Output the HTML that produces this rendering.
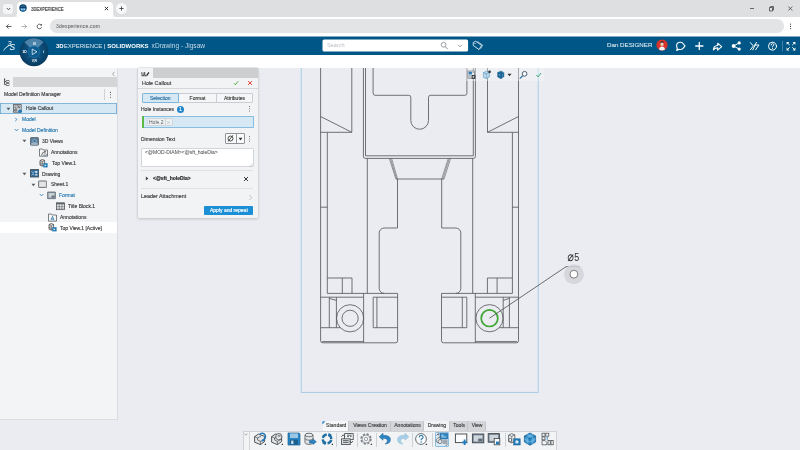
<!DOCTYPE html>
<html lang="en">
<head>
<meta charset="utf-8">
<title>3DEXPERIENCE</title>
<style>
*{box-sizing:border-box;margin:0;padding:0}
html,body{width:800px;height:450px;overflow:hidden;background:#eaecf1;font-family:"Liberation Sans",Arial,sans-serif;font-size:5px;color:#3d3d3d}
.abs{position:absolute}
#tabstrip{position:absolute;left:0;top:0;width:800px;height:17px;background:#dedfe1}
#tab{position:absolute;left:16.8px;top:2.4px;width:96.2px;height:15px;background:#fff;border-radius:4px 4px 0 0}
#navbar{position:absolute;left:0;top:16.5px;width:800px;height:20.5px;background:#fff}
#url{position:absolute;left:49.6px;top:19.3px;width:734.4px;height:13.4px;border-radius:6.7px;background:#e3e4e6}
#hdr{position:absolute;left:0;top:36.5px;width:800px;height:18.5px;background:#005686}
#white2{position:absolute;left:0;top:55px;width:800px;height:13px;background:#fff}
.t{position:absolute;white-space:nowrap;line-height:1;-webkit-text-stroke:0.15px currentColor;will-change:transform}
#lp{position:absolute;left:0;top:68px;width:117.5px;height:351.5px;background:#f3f4f6;border-right:1px solid #dadcdf;border-bottom:1px solid #dadcdf;border-radius:0 2px 0 0}
.row{position:absolute;left:0;height:10.8px;width:117px}
.row .t{top:3.4px;font-size:5px;color:#3d3d3d}
.blue{color:#2a7ab0 !important}
#dlg{position:absolute;left:138px;top:68px;width:119.5px;height:150px;background:#f2f3f5;box-shadow:0 0 0 0.6px #cfd2d6,0 1px 3px rgba(0,0,0,.2);border-radius:1px}
</style>
</head>
<body>
<!-- browser chrome -->
<div id="tabstrip">
  <div class="abs" style="left:3px;top:4px;width:10px;height:10px;border-radius:3px;background:#f5f5f6"></div>
  <svg class="abs" style="left:5.5px;top:7px" width="5" height="4" viewBox="0 0 5 4"><path d="M0.8 1 L2.5 2.8 L4.2 1" fill="none" stroke="#333" stroke-width="0.8"/></svg>
  <div id="tab">
    <svg class="abs" style="left:2.3px;top:1.4px" width="8" height="8" viewBox="0 0 8 8"><circle cx="4" cy="4" r="3.7" fill="#0a3f6b"/><path d="M0.9 4.6 Q4 3.4 7.1 4.6 Q6.4 7.4 4 7.5 Q1.6 7.4 0.9 4.6Z" fill="#2f7fb5"/><path d="M2.2 4.6h1.2v1.4h-1.2zM4.6 4.6h1.2v1.4h-1.2z" fill="#cfe2ef"/><path d="M2 2.6 Q4 1.2 6 2.6" fill="none" stroke="#5c9cc7" stroke-width="0.6"/></svg>
    <div class="t" style="left:14px;top:5.2px;font-size:4.8px;color:#333;transform:scaleX(0.88);transform-origin:0 0">3DEXPERIENCE</div>
    <svg class="abs" style="left:87.3px;top:3.2px" width="5" height="5" viewBox="0 0 5 5"><path d="M0.8 0.8L4.2 4.2M4.2 0.8L0.8 4.2" stroke="#222" stroke-width="0.9"/></svg>
  </div>
  <div class="abs" style="left:116px;top:3px;width:11px;height:11px;border-radius:50%;background:#f8f8f8"></div>
  <svg class="abs" style="left:119px;top:6px" width="5" height="5" viewBox="0 0 5 5"><path d="M2.5 0.4V4.6M0.4 2.5H4.6" stroke="#333" stroke-width="0.8"/></svg>
  <!-- window controls -->
  <svg class="abs" style="left:748px;top:4px" width="48" height="10" viewBox="0 0 48 10"><path d="M2 4.5H6" stroke="#333" stroke-width="0.7"/><path d="M21.5 3.5h3v3.5h-3z M22.5 3.5v-1h3v3.5h-1" fill="none" stroke="#333" stroke-width="0.7"/><path d="M40.3 2.5L44.3 6.5M44.3 2.5L40.3 6.5" stroke="#333" stroke-width="0.7"/></svg>
</div>
<div id="navbar"></div>
<svg class="abs" style="left:12px;top:12px" width="106" height="5" viewBox="12 12 106 5"><path d="M13.8 16.6 Q16.8 16.6 16.8 13.6 V16.6Z M116 16.6 Q113 16.6 113 13.6 V16.6Z" fill="#fff"/></svg>
<div id="url"></div>
<svg class="abs" style="left:5px;top:22px" width="40" height="9" viewBox="0 0 40 9"><path d="M1.5 4.5H6.5M3.6 2.3L1.4 4.5L3.6 6.7" fill="none" stroke="#333" stroke-width="0.8"/><path d="M16.5 4.5H21.5M19.4 2.3L21.6 4.5L19.4 6.7" fill="none" stroke="#9a9a9a" stroke-width="0.8"/><path d="M36.3 3.2A2.3 2.3 0 1 0 36.6 5.2" fill="none" stroke="#333" stroke-width="0.8"/><path d="M36.9 1.8V3.6H35.1Z" fill="#333"/></svg>
<div class="t" style="left:55.6px;top:24.2px;font-size:5px;color:#7a7a7a;letter-spacing:0.2px">3dexperience.com</div>
<svg class="abs" style="left:788.8px;top:22.8px" width="3" height="8" viewBox="0 0 3 8"><circle cx="1.5" cy="1.2" r="0.6" fill="#444"/><circle cx="1.5" cy="3.4" r="0.6" fill="#444"/><circle cx="1.5" cy="5.6" r="0.6" fill="#444"/></svg>

<!-- app header -->
<div class="abs" style="left:0;top:36px;width:800px;height:1px;background:#80abc3"></div>
<div id="hdr"></div>
<div id="white2"></div>
<!-- 3DS logo -->
<svg class="abs" style="left:2px;top:38px;will-change:transform" width="16" height="16" viewBox="0 0 16 16"><text x="5.6" y="8.2" font-size="7.4" font-style="italic" fill="#fff" font-family="Liberation Sans,sans-serif">3</text><text x="7.4" y="12.2" font-size="8.4" font-style="italic" fill="#fff" font-family="Liberation Sans,sans-serif">S</text><path d="M1.3 13.8 Q2.4 10.6 5.4 9 Q7.6 7.8 8.2 6 Q7.2 7.4 4.8 8.4 Q2 9.8 1.3 13.8Z" fill="#fff"/></svg>
<!-- compass -->
<svg class="abs" style="left:19px;top:36px;will-change:transform" width="30" height="32" viewBox="0 0 30 32">
  <defs><radialGradient id="cg" cx="50%" cy="45%" r="55%"><stop offset="0" stop-color="#0f5a8c"/><stop offset="0.6" stop-color="#0b4a76"/><stop offset="1" stop-color="#083a5f"/></radialGradient></defs>
  <circle cx="15" cy="15.8" r="14.4" fill="url(#cg)"/>
  <path d="M15 15.8 L5.4 6.2 A13.6 13.6 0 0 1 24.6 6.2 Z" fill="#8dbbdc" fill-opacity="0.5"/>
  <path d="M8.4 22.4 L11 19.8 M21.6 22.4 L19 19.8" stroke="#5f9bc4" stroke-width="0.4" stroke-opacity="0.7"/>
  <circle cx="15" cy="15.8" r="5.9" fill="#0b5b8e" stroke="#2f7fb2" stroke-width="0.5"/>
  <path d="M13.2 13 L18 15.8 L13.2 18.6 Z" fill="none" stroke="#e8f1f7" stroke-width="0.8" stroke-linejoin="round"/>
  <text x="15.3" y="8.9" font-size="3.8" fill="#fff" text-anchor="middle" font-family="Liberation Sans,sans-serif" font-style="italic" font-weight="bold">N</text>
  <text x="5.6" y="17" font-size="3.3" fill="#fff" text-anchor="middle" font-family="Liberation Sans,sans-serif" font-weight="bold">3D</text>
  <text x="24.6" y="17.2" font-size="3.8" fill="#fff" text-anchor="middle" font-family="Liberation Sans,sans-serif" font-style="italic" font-weight="bold">i</text>
  <text x="15.3" y="26.4" font-size="3.3" fill="#fff" text-anchor="middle" font-family="Liberation Sans,sans-serif" font-weight="bold">V,R</text>
</svg>
<div class="t" style="left:56px;top:42.8px;font-size:6px;color:#fff;-webkit-text-stroke:0"><b>3D</b><span style="color:#dce8f0">EXPERIENCE</span> | <b>SOLIDWORKS</b> <span style="color:#c4d9e7;font-size:6.6px;margin-left:1.3px">xDrawing - Jigsaw</span></div>
<!-- search -->
<svg class="abs" style="left:320px;top:37px" width="150" height="17" viewBox="320 37 150 17"><rect x="322.5" y="39.5" width="145.6" height="12.1" rx="1.6" fill="#fff"/></svg>
<div class="t" style="left:327px;top:43px;font-size:5.6px;color:#b9bdc2;-webkit-text-stroke:0">Search</div>
<svg class="abs" style="left:439px;top:41px" width="28" height="10" viewBox="0 0 28 10"><circle cx="4.6" cy="3.8" r="2.4" fill="none" stroke="#7d8288" stroke-width="0.75"/><path d="M6.3 5.6L8.8 8.2" stroke="#7d8288" stroke-width="0.9"/><path d="M19 3.8L21 5.8L23 3.8" fill="none" stroke="#7d8288" stroke-width="0.8"/></svg>
<svg class="abs" style="left:472px;top:40px" width="12" height="12" viewBox="0 0 12 12"><path d="M1.2 2.6 L3.6 1.2 L9.6 5.4 L7 9.6 L1.2 5.4 Z" fill="none" stroke="#fff" stroke-width="0.8" stroke-linejoin="round"/><circle cx="3" cy="3.3" r="0.6" fill="#fff"/><path d="M5.4 1.3 L10.7 5.2 L8.6 8.8" fill="none" stroke="#fff" stroke-width="0.6"/></svg>
<!-- right header -->
<div class="t" style="left:606.5px;top:42.3px;font-size:6.2px;color:#eaf1f6;-webkit-text-stroke:0.05px">Dan DESIGNER</div>
<svg class="abs" style="left:656.3px;top:39.2px" width="12" height="12" viewBox="0 0 12 12"><circle cx="6" cy="6" r="5.6" fill="#d9342b"/><path d="M3 10.6 Q3.4 7.4 6 7.4 Q8.6 7.4 9 10.6 Q6 12.4 3 10.6Z" fill="#f1f1f1"/><ellipse cx="6" cy="5" rx="1.7" ry="2.1" fill="#f0cdb8"/><path d="M4.1 4.6 Q4 2 6 2 Q8 2 7.9 4.6 Q7.2 3.4 6 3.5 Q4.8 3.4 4.1 4.6Z" fill="#2b2422"/></svg>
<svg class="abs" style="left:674px;top:39.5px" width="124" height="12" viewBox="0 0 124 12">
  <g fill="none" stroke="#fff" stroke-width="1.1" stroke-linecap="round" stroke-linejoin="round">
    <path d="M6.4 2.3 q1.6 0 2.6 1.2 l2 2.4 l-2 2.4 q-1 1.2 -2.6 1.2 q-0.8 0 -1.5 -0.3 l-2.2 1.2 l0.6 -2.3 q-0.7 -1 -0.7 -2.2 q0 -3.6 3.8 -3.6z"/>
    <path d="M25.3 2.4V9.6M21.7 6H28.9" stroke-width="1.3"/>
    <path d="M39.4 9.8 q0.2 -4 4.3 -4.3 v-2.3 l4 3.5 l-4 3.5 v-2.3 q-2.6 -0.1 -4.3 1.9z"/>
    <path d="M59.6 6 L65 3 M59.6 6 L65 9" stroke-width="1"/>
    <path d="M76.4 2.6 L79.4 6 L76.4 9.8 M82.4 2.4 L78.8 9.8 M80.4 5 H85 L81.6 9.8" stroke-width="1"/>
    <circle cx="98.5" cy="6.2" r="4" stroke-width="1"/>
    <path d="M97.2 5.1 q0 -1.4 1.3 -1.4 q1.4 0 1.4 1.2 q0 0.9 -1.4 1.5 v0.6" stroke-width="0.9"/>
    <path d="M108.5 1.2V10.8" stroke="#7fb0cf" stroke-width="0.5"/>
    <path d="M113.4 2.8 L115.4 4.8 M120.6 2.8 L118.6 4.8 M113.4 9.6 L115.4 7.6 M120.6 9.6 L118.6 7.6" stroke-width="1"/>
  </g>
  <g fill="#fff"><circle cx="59.6" cy="6" r="1.9"/><circle cx="65.2" cy="2.9" r="1.6"/><circle cx="65.2" cy="9.1" r="1.6"/><circle cx="98.5" cy="8.6" r="0.55"/>
  <path d="M112.6 2h2.8l-2.8 2.8z M121.4 2h-2.8l2.8 2.8z M112.6 10.4h2.8l-2.8 -2.8z M121.4 10.4h-2.8l2.8 -2.8z"/></g>
</svg>
<!-- drawing -->
<svg class="abs" style="left:0;top:68px;will-change:transform" width="800" height="382" viewBox="0 68 800 382">
<rect x="301.2" y="40" width="237" height="352.4" fill="none" stroke="#9dcbe2" stroke-width="0.9"/>
<g fill="none" stroke="#5a5a5c" stroke-width="0.85" stroke-linejoin="round">
<!-- left column -->
<path d="M320.6 60V340.8Q320.6 342.8 322.6 342.8H395.6Q397.6 342.8 397.6 340.8V293.4"/>
<path d="M351.8 60V132.3H320.6M320.6 116.5L351.8 132.3"/>
<path d="M327.3 132.3V293.4M320.6 207.2H327.3"/>
<!-- right column -->
<path d="M518.5 60V340.8Q518.5 342.8 516.5 342.8H443.5Q441.5 342.8 441.5 340.8V293.4"/>
<path d="M487.5 60V132.3H518.5M518.5 116.5L487.5 132.3"/>
<path d="M512.4 132.3V293.4M512.4 207.2H518.5"/>
<!-- centre body -->
<path d="M363.4 60V156.4Q363.4 158.4 365.4 158.4H473.4Q475.4 158.4 475.4 156.4V60"/>
<path d="M365.5 60V155.8H473.3V60"/>
<path d="M373.1 60V93Q373.1 95.3 375.1 95.3H408.8Q410.8 95.3 410.8 97.3V120.4A8.85 8.85 0 0 0 428.5 120.4V97.3Q428.5 95.3 430.5 95.3H464.9Q466.9 95.3 466.9 93.3V60"/>
<path d="M367.3 158.4V293.4M472.7 158.4V293.4"/>
<path d="M389.3 158.4L395.8 178.8M391.6 158.4L397.5 178.8M390.4 158.4L396.6 178.8" stroke-width="0.6"/>
<path d="M450.6 158.4L444.1 178.8M448.3 158.4L441.7 178.8M449.4 158.4L442.9 178.8" stroke-width="0.6"/>
<path d="M395.8 179H444.1"/>
<path d="M397.5 178.8V228H384.2A5 5 0 0 0 379.2 233V288.4A5 5 0 0 0 384.2 293.4"/>
<path d="M441.7 178.8V228H455.8A5 5 0 0 1 460.8 233V288.4A5 5 0 0 1 455.8 293.4"/>
<!-- bottom-left -->
<path d="M327.3 278H352V293.4M342.3 278V293.4M327.3 293.4H397.6"/>
<path d="M320.6 297.2H363.6M363.6 293.4V342.8M322 341.6H363.6"/>
<path d="M397.6 297.2H373.2V327.7H397.6M376.9 297.2V327.7"/>
<path d="M320.6 327.7H340.3M329.3 297.2V327.7M336.4 297.2V327.7M329.3 298.4L336.4 300.4"/>
<circle cx="350.1" cy="318.3" r="13.6"/>
<circle cx="350.1" cy="318.3" r="8.1"/>
<!-- bottom-right -->
<path d="M512.4 278H487.4V293.4M497.1 278V293.4M512.4 293.4H441.5"/>
<path d="M518.5 297.2H475.3M475.3 293.4V342.8M517 341.6H475.3"/>
<path d="M441.5 297.2H466.8V327.7H441.5M462.3 297.2V327.7"/>
<path d="M518.5 327.7H499.3M509.4 297.2V327.7M503.2 297.2V327.7M509.4 298.4L503.2 300.4"/>
<circle cx="489.5" cy="318.2" r="13.6"/>
</g>
<circle cx="489.5" cy="318.2" r="8.3" fill="none" stroke="#3fa535" stroke-width="1.7"/>
<path d="M489.5 318.2L566 266.7H579.8" fill="none" stroke="#4a4a4c" stroke-width="0.8"/>
<circle cx="573.9" cy="274.2" r="10" fill="#d2d4d8" fill-opacity="0.85"/>
<circle cx="573.9" cy="274.2" r="3.9" fill="#fff" stroke="#4a4a4c" stroke-width="0.7"/>
<text transform="translate(567.4,260.5) scale(0.9,1.08)" font-family="DejaVu Sans, Liberation Sans, sans-serif" font-size="12" fill="#2a2a2a">⌀</text><text transform="translate(574.3,260.5) scale(0.78,1)" font-family="Liberation Sans, sans-serif" font-size="11.4" fill="#2a2a2a">5</text>
</svg>
<!-- view toolbar -->
<div class="abs" style="left:466px;top:68px;width:78px;height:13px;background:rgba(246,247,249,0.4)"></div>
<svg class="abs" style="left:467px;top:68px" width="79" height="13" viewBox="467 68 79 13">
  <rect x="467.9" y="71" width="6.8" height="7.2" fill="#e4e9ed" stroke="#59646e" stroke-width="0.6"/><rect x="468.7" y="71.8" width="3.2" height="2.6" fill="#2a7ab4"/><path d="M472.6 72.4h1.4M468.8 75.6h2M468.8 77h2" stroke="#59646e" stroke-width="0.5"/><rect x="471.6" y="75" width="3.8" height="3.8" fill="#34383c"/><circle cx="473.4" cy="76.8" r="0.9" fill="#e4e9ed"/>
  <path d="M483.4 72.6l3-1.4l3 1.2v4.6l-3.2 1.6l-2.8-1.2z" fill="#b5d3e6" stroke="#4a8cba" stroke-width="0.5"/><path d="M483.4 72.6l2.8 1.2v4.8M486.2 73.8l3.2-1.4" fill="none" stroke="#4a8cba" stroke-width="0.45"/><path d="M484.6 75l1 0.4v1.8" fill="none" stroke="#e8f1f7" stroke-width="0.5"/><circle cx="489.6" cy="71.8" r="1.35" fill="#34383c"/>
  <path d="M497.6 72.6l3-1.6l3.4 1.4v4.2l-3 2.2l-3.4-1.8z" fill="#1f6fa3" stroke="#174f77" stroke-width="0.4"/><path d="M497.6 72.6l3.4 1.6v4.6M501 74.2l3-1.8" fill="none" stroke="#174f77" stroke-width="0.4"/><path d="M497 71.6l1.8-1l1.4 0.8M502 70.6l1.8 0.8l-0.2 1.4M499 74.6l1 0.5M502.2 75.2l1-0.7" fill="none" stroke="#dfe9f0" stroke-width="0.6"/>
  <path d="M507.4 73.8h4.2l-2.1 2.5z" fill="#333"/>
  <circle cx="524.6" cy="73.8" r="2.4" fill="#f3f6f8" stroke="#4f6475" stroke-width="1"/><path d="M522.8 75.8l-3 2.8" stroke="#2a6f9f" stroke-width="1.2"/>
  <path d="M536.4 75l1.7 1.9l2.9-3.9" fill="none" stroke="#27a06b" stroke-width="0.9"/>
</svg>
<!-- left panel -->
<div id="lp">
<svg class="abs" style="left:110.5px;top:2.5px" width="5" height="6" viewBox="0 0 5 6"><path d="M3.4 0.8L1.6 3L3.4 5.2" fill="none" stroke="#777" stroke-width="0.6"/></svg>
<div class="abs" style="left:0;top:9px;width:117px;height:9.6px;background:#d4d5d7"></div>
<div class="abs" style="left:0;top:9px;width:13px;height:9.6px;background:#f3f4f6"></div>
<svg class="abs" style="left:3px;top:10px" width="8" height="9" viewBox="0 0 8 9"><path d="M1.6 0.8V6.6H3.4M1.6 3.6H3.4" fill="none" stroke="#2a2a2a" stroke-width="0.8"/><rect x="3.4" y="2.7" width="2.6" height="1.8" fill="none" stroke="#2a2a2a" stroke-width="0.6"/><rect x="3.4" y="5.7" width="2.6" height="1.8" fill="none" stroke="#2a2a2a" stroke-width="0.6"/><circle cx="1.6" cy="1" r="0.6" fill="#2a2a2a"/></svg>
<div class="t" style="left:3.6px;top:23.9px;font-size:5px;color:#3d3d3d">Model Definition Manager</div>
<div class="abs" style="left:104.4px;top:21px;width:0.5px;height:11px;background:#cfd1d4"></div>
<svg class="abs" style="left:108.5px;top:22.5px" width="3" height="8" viewBox="0 0 3 8"><circle cx="1.5" cy="1.4" r="0.55" fill="#555"/><circle cx="1.5" cy="3.8" r="0.55" fill="#555"/><circle cx="1.5" cy="6.2" r="0.55" fill="#555"/></svg>
<div class="row" style="top:35.1px;background:#d6e8f4;box-shadow:inset 0 0 0 0.8px #6aa5cf;">
<svg class="abs" style="left:5.6px;top:3.6px" width="5" height="4" viewBox="0 0 5 4"><path d="M0.5 0.7H4.3L2.4 3.3Z" fill="#5a5a5a"/></svg>
<svg class="abs" style="left:13.4px;top:1px" width="9" height="9" viewBox="0 0 9 9"><rect x="0.4" y="0.6" width="7.8" height="7.6" fill="#d5d8db" stroke="#55595d" stroke-width="0.8"/><path d="M1.4 2h2.4M4.6 2h2.6M1.4 3.6h2M4.4 3.6h2.8M1.2 7.2L3.6 4.6M4.4 1.4L6.8 4" stroke="#55595d" stroke-width="0.7"/><circle cx="2.8" cy="6" r="1.2" fill="none" stroke="#444" stroke-width="0.6"/><circle cx="7" cy="7.2" r="1.8" fill="#1f78b4"/></svg>
<div class="t" style="left:26px">Hole Callout</div>
</div>
<div class="row" style="top:46.0px;">
<svg class="abs" style="left:14.0px;top:3px" width="4" height="5" viewBox="0 0 4 5"><path d="M1.2 0.8L2.9 2.5L1.2 4.2" fill="none" stroke="#2a7ab0" stroke-width="0.85"/></svg>
<div class="t blue" style="left:21.6px">Model</div>
</div>
<div class="row" style="top:56.8px;">
<svg class="abs" style="left:13.5px;top:3.4px" width="5" height="4" viewBox="0 0 5 4"><path d="M0.8 1.1L2.5 2.9L4.2 1.1" fill="none" stroke="#2a7ab0" stroke-width="0.85"/></svg>
<div class="t blue" style="left:21.6px">Model Definition</div>
</div>
<div class="row" style="top:67.6px;">
<svg class="abs" style="left:22.4px;top:3.6px" width="5" height="4" viewBox="0 0 5 4"><path d="M0.5 0.7H4.3L2.4 3.3Z" fill="#5a5a5a"/></svg>
<svg class="abs" style="left:30.4px;top:1px" width="9" height="9" viewBox="0 0 9 9"><rect x="0.4" y="0.6" width="8.2" height="7.6" rx="0.8" fill="#5f7f9a" stroke="#3f4c57" stroke-width="0.7"/><rect x="1.2" y="6.4" width="6.6" height="1.2" fill="#c9d3dc"/><path d="M2.8 5.4V3.6L4.5 2.4L6.2 3.6V5.4Z" fill="#2a6f9f" stroke="#dfe8ef" stroke-width="0.5"/></svg>
<div class="t" style="left:42.0px">3D Views</div>
</div>
<div class="row" style="top:78.6px;">
<svg class="abs" style="left:39.0px;top:1px" width="9" height="9" viewBox="0 0 9 9"><path d="M0.5 1h3l0.8 1h4.2v6.2h-8z" fill="#f4f5f6" stroke="#50585f" stroke-width="0.75"/><path d="M2.6 7.4 q0.2-3.4 3.8-3.8 M5 2.8l1.6 0.7l-0.9 1.3" fill="none" stroke="#3a3a3a" stroke-width="0.7"/><path d="M4.6 7.6a1.8 1.8 0 0 1 3-1.6v1.6z" fill="#c9d3dc" stroke="#50585f" stroke-width="0.4"/></svg>
<div class="t" style="left:51.4px">Annotations</div>
</div>
<div class="row" style="top:89.6px;">
<svg class="abs" style="left:39.0px;top:1px" width="9" height="9" viewBox="0 0 9 9"><path d="M1 1.6l2.2-1.1l2.4 0.9v4.6l-2.2 1.1l-2.4-0.9z" fill="#e9e9e9" stroke="#4a4a4a" stroke-width="0.8"/><path d="M1 1.6l2.4 0.9v4.6M3.4 2.5l2.2-1.1" fill="none" stroke="#4a4a4a" stroke-width="0.6"/><circle cx="2.2" cy="4.6" r="0.9" fill="none" stroke="#4a4a4a" stroke-width="0.5"/><rect x="4.2" y="4.2" width="4.4" height="4.2" fill="#1f78b4"/><path d="M5.6 5.2l1.8 1.1l-1.8 1.1z" fill="#fff"/></svg>
<div class="t" style="left:51.6px">Top View.1</div>
</div>
<div class="row" style="top:100.2px;">
<svg class="abs" style="left:22.4px;top:3.6px" width="5" height="4" viewBox="0 0 5 4"><path d="M0.5 0.7H4.3L2.4 3.3Z" fill="#5a5a5a"/></svg>
<svg class="abs" style="left:30.4px;top:1px" width="9" height="9" viewBox="0 0 9 9"><rect x="0.4" y="0.6" width="8.2" height="7.4" fill="#2f6c9a" stroke="#3b4650" stroke-width="0.8"/><path d="M1.6 2.4l1.4 1.4l1.4-1.4M1.6 6.2l1.4-1.4l1.4 1.4" fill="none" stroke="#e6eef4" stroke-width="0.6"/><rect x="5.2" y="2" width="2.2" height="1.8" fill="#dfe8ef"/><rect x="5.2" y="4.8" width="2.2" height="1.8" fill="#b9cddc"/></svg>
<div class="t" style="left:42.0px">Drawing</div>
</div>
<div class="row" style="top:111.0px;">
<svg class="abs" style="left:30.6px;top:3.6px" width="5" height="4" viewBox="0 0 5 4"><path d="M0.5 0.7H4.3L2.4 3.3Z" fill="#5a5a5a"/></svg>
<svg class="abs" style="left:38.4px;top:1px" width="9" height="9" viewBox="0 0 9 9"><rect x="0.5" y="0.9" width="8.2" height="6.6" rx="0.6" fill="#c9cbcd" stroke="#64686c" stroke-width="0.8"/><rect x="1.6" y="2" width="6" height="4.4" fill="#e4e5e6"/></svg>
<div class="t" style="left:50.8px">Sheet.1</div>
</div>
<div class="row" style="top:121.8px;">
<svg class="abs" style="left:38.5px;top:3.4px" width="5" height="4" viewBox="0 0 5 4"><path d="M0.8 1.1L2.5 2.9L4.2 1.1" fill="none" stroke="#2a7ab0" stroke-width="0.85"/></svg>
<svg class="abs" style="left:47.0px;top:1px" width="9" height="9" viewBox="0 0 9 9"><rect x="0.4" y="0.9" width="8.2" height="6.8" rx="0.5" fill="#7d8a96" stroke="#56616b" stroke-width="0.6"/><rect x="1.5" y="2" width="6" height="4.6" fill="#c9d0d6"/><rect x="4.6" y="4.6" width="2.9" height="2" fill="#5f6b76"/></svg>
<div class="t blue" style="left:58.8px">Format</div>
</div>
<div class="row" style="top:132.6px;">
<svg class="abs" style="left:56.0px;top:1px" width="9" height="9" viewBox="0 0 9 9"><rect x="0.5" y="0.9" width="8" height="6.8" fill="#fff" stroke="#3f444a" stroke-width="0.7"/><path d="M0.5 2.7h8M0.5 4.4h8M0.5 6.1h8M3.2 2.7v5M5.9 2.7v5" stroke="#3f444a" stroke-width="0.5"/><path d="M0.5 1.3h8" stroke="#3f444a" stroke-width="1"/></svg>
<div class="t" style="left:68.0px">Title Block.1</div>
</div>
<div class="row" style="top:143.6px;">
<svg class="abs" style="left:47.6px;top:1px" width="9" height="9" viewBox="0 0 9 9"><path d="M0.5 1h3l0.8 1h4.2v6.2h-8z" fill="#f6f7f8" stroke="#50585f" stroke-width="0.75"/><path d="M3 7.4l1.5-4l1.5 4M3.6 6.1h1.9" fill="none" stroke="#1f6fa3" stroke-width="0.75"/></svg>
<div class="t" style="left:59.8px">Annotations</div>
</div>
<div class="row" style="top:154.2px;background:#fff;">
<svg class="abs" style="left:47.6px;top:1px" width="9" height="9" viewBox="0 0 9 9"><path d="M1 1.6l2.2-1.1l2.4 0.9v4.6l-2.2 1.1l-2.4-0.9z" fill="#e9e9e9" stroke="#4a4a4a" stroke-width="0.8"/><path d="M1 1.6l2.4 0.9v4.6M3.4 2.5l2.2-1.1" fill="none" stroke="#4a4a4a" stroke-width="0.6"/><circle cx="2.2" cy="4.6" r="0.9" fill="none" stroke="#4a4a4a" stroke-width="0.5"/><rect x="4.2" y="4.2" width="4.4" height="4.2" fill="#1f78b4"/><path d="M5.6 5.2l1.8 1.1l-1.8 1.1z" fill="#fff"/></svg>
<div class="t" style="left:60.0px">Top View.1 [Active]</div>
</div>
</div>
<!-- dialog -->
<div id="dlg">
<div class="abs" style="left:0;top:0;width:119.5px;height:9.8px;background:#cdcecf"></div>
<div class="abs" style="left:0;top:0;width:14.6px;height:9.8px;background:#f2f3f5"></div>
<svg class="abs" style="left:3.4px;top:3px" width="9" height="6" viewBox="0 0 9 6"><path d="M0.9 1V4.4H2.9V1.6M3.7 1V4.4H5.4" fill="none" stroke="#2e2e2e" stroke-width="0.8"/><path d="M5.6 4.6L7.9 1.3" stroke="#2e2e2e" stroke-width="1.3"/><path d="M0.6 5.2H6" stroke="#555" stroke-width="0.4"/></svg>
<div class="t" style="left:4px;top:12.9px;font-size:5.4px;color:#3d3d3d">Hole Callout</div>
<svg class="abs" style="left:95.0px;top:12.0px" width="6" height="6" viewBox="0 0 6 6"><path d="M0.8 3.2L2.3 4.8L5.2 1.2" fill="none" stroke="#4aa83a" stroke-width="0.9"/></svg>
<svg class="abs" style="left:109.0px;top:12.0px" width="6" height="6" viewBox="0 0 6 6"><path d="M1 1L5 5M5 1L1 5" fill="none" stroke="#e0352b" stroke-width="0.9"/></svg>
<div class="abs" style="left:0;top:20.0px;width:119.5px;height:0.5px;background:#d5d7da"></div>
<div class="abs" style="left:4.0px;top:24.5px;width:110.5px;height:10.4px;border:0.6px solid #c9ccd0;border-radius:1.2px;background:#f5f6f7"></div>
<div class="abs" style="left:4.0px;top:24.5px;width:36.5px;height:10.4px;border:0.7px solid #7fb6dc;border-radius:1.2px 0 0 1.2px;background:#d6e8f4"></div>
<div class="abs" style="left:77.6px;top:24.5px;width:0.6px;height:10.4px;background:#c9ccd0"></div>
<div class="t" style="left:4.0px;top:28.0px;width:36.5px;text-align:center;font-size:5px;color:#2a6f9f">Selection</div>
<div class="t" style="left:40.5px;top:28.0px;width:37px;text-align:center;font-size:5px;color:#3d3d3d">Format</div>
<div class="t" style="left:77.6px;top:28.0px;width:37px;text-align:center;font-size:5px;color:#3d3d3d">Attributes</div>
<div class="t" style="left:3.0px;top:39.0px;font-size:5px;color:#3d3d3d">Hole Instances</div>
<div class="abs" style="left:38.9px;top:37.8px;width:7.1px;height:7.1px;border-radius:50%;background:#1f86c8"></div>
<div class="t" style="left:38.9px;top:40.1px;width:7px;text-align:center;font-size:4.6px;color:#fff">1</div>
<svg class="abs" style="left:110.0px;top:37.0px" width="3" height="8" viewBox="0 0 3 8"><circle cx="1.5" cy="1.6" r="0.5" fill="#555"/><circle cx="1.5" cy="3.8" r="0.5" fill="#555"/><circle cx="1.5" cy="6" r="0.5" fill="#555"/></svg>
<div class="abs" style="left:3.5px;top:48.4px;width:112.2px;height:11.2px;border:0.7px solid #86bde2;background:#d6e8f4;border-radius:0.8px"></div>
<div class="abs" style="left:3.5px;top:48.4px;width:2.2px;height:11.2px;background:#5cb947"></div>
<div class="abs" style="left:8.6px;top:50.3px;width:26px;height:7.8px;border:0.5px solid #cdd4da;background:#eff2f5;border-radius:1.2px"></div>
<div class="abs" style="left:26.6px;top:50.3px;width:0.5px;height:7.8px;background:#cdd4da"></div>
<div class="t" style="left:11.0px;top:52.1px;font-size:5px;color:#5a5a5a;-webkit-text-stroke:0">Hole.2</div>
<svg class="abs" style="left:28.0px;top:51.6px" width="5" height="5" viewBox="0 0 5 5"><path d="M1 1L4 4M4 1L1 4" fill="none" stroke="#a9afb6" stroke-width="0.5"/></svg>
<div class="t" style="left:3.0px;top:69.0px;font-size:5px;color:#3d3d3d">Dimension Text</div>
<div class="abs" style="left:86.5px;top:65.2px;width:20px;height:10.4px;border:0.6px solid #8e949a;background:#fbfbfc;border-radius:1px"></div>
<div class="abs" style="left:97.6px;top:65.2px;width:0.5px;height:10.4px;background:#8e949a"></div>
<svg class="abs" style="left:87.6px;top:66.0px" width="9" height="9" viewBox="0 0 9 9"><circle cx="4.5" cy="4.5" r="2.5" fill="none" stroke="#222" stroke-width="0.8"/><path d="M2 7.6L7 1.2" stroke="#222" stroke-width="0.8"/></svg>
<svg class="abs" style="left:99.5px;top:68.6px" width="5" height="4" viewBox="0 0 5 4"><path d="M0.6 0.8H4.4L2.5 3.4Z" fill="#333"/></svg>
<svg class="abs" style="left:109.6px;top:66.6px" width="3" height="8" viewBox="0 0 3 8"><circle cx="1.5" cy="1.6" r="0.5" fill="#555"/><circle cx="1.5" cy="3.8" r="0.5" fill="#555"/><circle cx="1.5" cy="6" r="0.5" fill="#555"/></svg>
<div class="abs" style="left:3.4px;top:79.6px;width:112.4px;height:19.8px;border:0.6px solid #d3d6da;background:#fff;border-radius:1px"></div>
<div class="t" style="left:6.7px;top:81.7px;font-size:5px;color:#555;-webkit-text-stroke:0.05px">&lt;@MOD-DIAM&gt;&lt;@sft_holeDia&gt;</div>
<svg class="abs" style="left:111.2px;top:95.0px" width="4" height="4" viewBox="0 0 4 4"><path d="M3.6 0.6L0.6 3.6M3.6 2.2L2.2 3.6" stroke="#9aa0a6" stroke-width="0.4"/></svg>
<div class="abs" style="left:3.4px;top:102.2px;width:112px;height:0.5px;background:#dfe1e4"></div>
<svg class="abs" style="left:7.4px;top:108.2px" width="4" height="5" viewBox="0 0 4 5"><path d="M0.8 0.6V4.4L3.4 2.5Z" fill="#444"/></svg>
<div class="t" style="left:14.7px;top:108.0px;font-size:5px;color:#222;font-weight:bold">&lt;@sft_holeDia&gt;</div>
<svg class="abs" style="left:104.7px;top:107.6px" width="6" height="6" viewBox="0 0 6 6"><path d="M1 1L5 5M5 1L1 5" fill="none" stroke="#222" stroke-width="0.9"/></svg>
<div class="abs" style="left:3.4px;top:120.2px;width:112px;height:0.5px;background:#dfe1e4"></div>
<div class="t" style="left:3.0px;top:126.3px;font-size:5.4px;color:#3d3d3d">Leader Attachment</div>
<svg class="abs" style="left:110.4px;top:125.5px" width="5" height="7" viewBox="0 0 5 7"><path d="M1.4 1L3.8 3.5L1.4 6" fill="none" stroke="#9aa0a6" stroke-width="0.6"/></svg>
<div class="abs" style="left:65.6px;top:137.5px;width:49.8px;height:9px;background:#1a8fd6;border-radius:1px"></div>
<div class="t" style="left:65.6px;top:140.2px;width:49.8px;text-align:center;font-size:5px;color:#fff">Apply and repeat</div>
</div>
<!-- bottom toolbar -->
<div class="abs" style="left:322.5px;top:421px;width:26.5px;height:9.6px;background:#f6f7f8;border-right:0.5px solid #c2c5c9;border-radius:1.5px 0 0 0;"></div>
<div class="t" style="left:322.5px;top:423.4px;width:26.5px;text-align:center;font-size:5px;color:#3d3d3d">Standard</div>
<div class="abs" style="left:349.0px;top:421px;width:42.0px;height:9.6px;background:#d3d5d8;border-right:0.5px solid #c2c5c9;"></div>
<div class="t" style="left:349.0px;top:423.4px;width:42.0px;text-align:center;font-size:5px;color:#3d3d3d">Views Creation</div>
<div class="abs" style="left:391.0px;top:421px;width:33.0px;height:9.6px;background:#d3d5d8;border-right:0.5px solid #c2c5c9;"></div>
<div class="t" style="left:391.0px;top:423.4px;width:33.0px;text-align:center;font-size:5px;color:#3d3d3d">Annotations</div>
<div class="abs" style="left:424.0px;top:421px;width:25.6px;height:9.6px;background:#f2f3f5;border-right:0.5px solid #c2c5c9;"></div>
<div class="t" style="left:424.0px;top:423.4px;width:25.6px;text-align:center;font-size:5px;color:#3d3d3d">Drawing</div>
<div class="abs" style="left:449.6px;top:421px;width:18.4px;height:9.6px;background:#d3d5d8;border-right:0.5px solid #c2c5c9;"></div>
<div class="t" style="left:449.6px;top:423.4px;width:18.4px;text-align:center;font-size:5px;color:#3d3d3d">Tools</div>
<div class="abs" style="left:468.0px;top:421px;width:18.0px;height:9.6px;background:#d3d5d8;border-right:0.5px solid #c2c5c9;border-radius:0 1.5px 0 0;"></div>
<div class="t" style="left:468.0px;top:423.4px;width:18.0px;text-align:center;font-size:5px;color:#3d3d3d">View</div>
<svg class="abs" style="left:322px;top:421px" width="4" height="4" viewBox="0 0 4 4"><path d="M0.3 3.4V1.6Q0.3 0.3 1.6 0.3H3.4Z" fill="#2a86c5"/></svg>
<div class="abs" style="left:243.4px;top:430.6px;width:314px;height:20px;background:#f2f3f5;border:0.6px solid #d0d3d6;border-bottom:none;border-radius:1px 1px 0 0"></div>
<div class="abs" style="left:243.4px;top:430.6px;width:6.4px;height:20px;border-right:0.5px solid #d5d7da"></div>
<svg class="abs" style="left:244.4px;top:432.5px" width="4" height="3" viewBox="0 0 4 3"><path d="M0.6 0.6L2 2.2L3.4 0.6" fill="none" stroke="#666" stroke-width="0.5"/></svg>
<div class="abs" style="left:336.4px;top:433px;width:0.5px;height:13.5px;background:#cfd2d5"></div>
<div class="abs" style="left:356.8px;top:433px;width:0.5px;height:13.5px;background:#cfd2d5"></div>
<div class="abs" style="left:375.7px;top:433px;width:0.5px;height:13.5px;background:#cfd2d5"></div>
<div class="abs" style="left:411.7px;top:433px;width:0.5px;height:13.5px;background:#cfd2d5"></div>
<div class="abs" style="left:432.0px;top:433px;width:0.5px;height:13.5px;background:#cfd2d5"></div>
<div class="abs" style="left:504.7px;top:433px;width:0.5px;height:13.5px;background:#cfd2d5"></div>
<div class="abs" style="left:434.7px;top:432.3px;width:14.8px;height:14.4px;background:#dbeaf5;border:0.7px solid #8fc0e2;border-radius:1px"></div>
<svg class="abs" style="left:253.4px;top:432.4px" width="14" height="14" viewBox="0 0 14 14"><path d="M1.6 4.6L5.6 2L11.6 4.4V9.6L7.4 12.6L1.6 10.2Z" fill="#e4e6e8" stroke="#3f4448" stroke-width="0.9" stroke-linejoin="round"/><path d="M1.6 4.6L4.6 6V8L7.4 9.4V12.6M4.6 6L8 4M7.4 9.4L11.6 7" fill="none" stroke="#3f4448" stroke-width="0.7"/><path d="M6.6 2.6a3.3 3.3 0 1 1 3.6 5.2" fill="none" stroke="#2179b8" stroke-width="1.5"/><path d="M11.6 9.2l-3.2 0.4l1.6-3z" fill="#2179b8"/><path d="M11.2 13l1.8 0l0-1.8z" fill="#333"/></svg>
<svg class="abs" style="left:270.2px;top:432.4px" width="14" height="14" viewBox="0 0 14 14"><path d="M1.6 4.6L5.6 2L11.6 4.4V9.6L7.4 12.6L1.6 10.2Z" fill="#e4e6e8" stroke="#3f4448" stroke-width="0.9" stroke-linejoin="round"/><path d="M1.6 4.6L4.6 6V8L7.4 9.4V12.6M4.6 6L8 4M7.4 9.4L11.6 7" fill="none" stroke="#3f4448" stroke-width="0.7"/><circle cx="8.8" cy="4.6" r="3.2" fill="#e9ebed" fill-opacity="0.6" stroke="#4d5358" stroke-width="0.8"/><path d="M8.8 2.8V4.6L10.6 3.4" fill="none" stroke="#4d5358" stroke-width="0.7"/><path d="M11.2 13l1.8 0l0-1.8z" fill="#333"/></svg>
<svg class="abs" style="left:286.8px;top:432.4px" width="14" height="14" viewBox="0 0 14 14"><path d="M1 1H12L13 2V13H1Z" fill="#2a86c5" stroke="#1b5f90" stroke-width="0.7"/><rect x="3" y="1.4" width="8" height="4.6" fill="#9cc7e4"/><rect x="3" y="7.6" width="8" height="5" fill="#1b5f90"/><rect x="4.2" y="8.6" width="2.2" height="3.4" fill="#cfe3f1"/></svg>
<svg class="abs" style="left:303.4px;top:432.4px" width="14" height="14" viewBox="0 0 14 14"><path d="M2 3q0-1.8 4-1.8t4 1.8v7.6q0 1.8-4 1.8t-4-1.8z" fill="#e4e6e8" stroke="#4d5358" stroke-width="0.8"/><path d="M2 3q0 1.8 4 1.8t4-1.8M2 6.4q0 1.8 4 1.8t4-1.8" fill="none" stroke="#4d5358" stroke-width="0.7"/><path d="M6.4 8.6H10V7L13.4 9.8L10 12.6V11H6.4Z" fill="#2a86c5" stroke="#1b5f90" stroke-width="0.5"/></svg>
<svg class="abs" style="left:320.2px;top:432.4px" width="14" height="14" viewBox="0 0 14 14"><circle cx="7" cy="7" r="4.3" fill="none" stroke="#1f6fa3" stroke-width="2.3" stroke-dasharray="5.2 1.55" stroke-dashoffset="-0.8"/><path d="M8.6 0.8l3.4 2.2l-3.2 1.6z M5.4 13.2l-3.4-2.2l3.2-1.6z" fill="#1f6fa3"/><path d="M11.2 13l1.8 0l0-1.8z" fill="#333"/></svg>
<svg class="abs" style="left:339.6px;top:432.4px" width="14" height="14" viewBox="0 0 14 14"><rect x="4.6" y="1.6" width="8.6" height="6" fill="#f4f5f6" stroke="#3f4448" stroke-width="0.8"/><rect x="1.6" y="6.8" width="8.6" height="5.8" fill="#d9dde0" stroke="#3f4448" stroke-width="0.8"/><path d="M7 3.2h4.6M7 4.6h2M10 4.6h1.6M3 8.6h5.6M3 10.4h5.6" stroke="#3f4448" stroke-width="0.8"/><path d="M1.4 4.8l1.8-2l1.8 2M12.8 9l-1.5 2l-1.5-2" fill="none" stroke="#333" stroke-width="0.8"/></svg>
<svg class="abs" style="left:358.7px;top:432.4px" width="14" height="14" viewBox="0 0 14 14"><circle cx="7" cy="7" r="4.6" fill="none" stroke="#7d8388" stroke-width="2.2" stroke-dasharray="2.1 1.51"/><circle cx="7" cy="7" r="4" fill="#f2f3f5" stroke="#7d8388" stroke-width="0.7"/><circle cx="7" cy="7" r="1.7" fill="none" stroke="#7d8388" stroke-width="0.7"/><path d="M11.2 13l1.8 0l0-1.8z" fill="#333"/></svg>
<svg class="abs" style="left:378.0px;top:432.4px" width="14" height="14" viewBox="0 0 14 14"><path d="M5 1.2L1.2 4.8L5 8.2V6.2q4-0.4 4.4 2.6q0.2 2-2.4 3.2q5.8-0.2 5.4-5Q12 3.2 5 3.3Z" fill="#2a86c5" stroke="#1b5f90" stroke-width="0.5"/></svg>
<svg class="abs" style="left:396.0px;top:432.4px" width="14" height="14" viewBox="0 0 14 14"><path d="M9 1.2L12.8 4.8L9 8.2V6.2q-4-0.4-4.4 2.6q-0.2 2 2.4 3.2q-5.8-0.2-5.4-5Q2 3.2 9 3.3Z" fill="#a9cfe8" stroke="#8bbad8" stroke-width="0.5"/></svg>
<svg class="abs" style="left:414.3px;top:432.4px" width="14" height="14" viewBox="0 0 14 14"><circle cx="7" cy="7" r="5.4" fill="#fafbfc" stroke="#5c6268" stroke-width="0.9"/><path d="M5.2 5.4q0-1.9 1.9-1.9q2 0 2 1.7q0 1.1-1.9 2v1" fill="none" stroke="#1f6fa3" stroke-width="1.1"/><circle cx="7.2" cy="10" r="0.7" fill="#1f6fa3"/><path d="M11.2 13l1.8 0l0-1.8z" fill="#333"/></svg>
<svg class="abs" style="left:435.0px;top:432.4px" width="14" height="14" viewBox="0 0 14 14"><rect x="5" y="1.6" width="7.6" height="5.4" fill="#2a86c5" stroke="#1b5f90" stroke-width="0.6"/><path d="M6.2 3.2h2.4M6.2 5h5" stroke="#e9f1f7" stroke-width="0.8"/><path d="M2.6 6.2l2.6-1.2v4.2l-1.8 1.8l-2.2-1.4V7.4z" fill="#e4e6e8" stroke="#3f4448" stroke-width="0.6"/><circle cx="5" cy="9.6" r="2" fill="#e4e6e8" stroke="#3f4448" stroke-width="0.6"/><path d="M7.6 9h5M7.6 11h5" stroke="#3f4448" stroke-width="0.8"/><path d="M1.6 3.4l1.8-1.8l0 1.6M12.4 12.6l-1.8 0.8" fill="none" stroke="#333" stroke-width="0.7"/></svg>
<svg class="abs" style="left:454.0px;top:432.4px" width="14" height="14" viewBox="0 0 14 14"><rect x="1.4" y="2" width="11.4" height="8.6" fill="#fbfcfc" stroke="#3f4448" stroke-width="0.9"/><path d="M10.6 7.6V13M8 10.3H13.2" stroke="#2179b8" stroke-width="1.8"/></svg>
<svg class="abs" style="left:470.7px;top:432.4px" width="14" height="14" viewBox="0 0 14 14"><rect x="1.4" y="2" width="11.4" height="8.8" fill="#7f8c98" stroke="#3f4a54" stroke-width="0.9"/><rect x="2.8" y="3.4" width="8.6" height="6" fill="#cfd6dc"/><rect x="7.2" y="6.6" width="4.2" height="2.8" fill="#5f6b76"/></svg>
<svg class="abs" style="left:487.3px;top:432.4px" width="14" height="14" viewBox="0 0 14 14"><rect x="1.2" y="1.6" width="11.2" height="8.6" fill="#7f8c98" stroke="#3f4a54" stroke-width="0.9"/><rect x="2.6" y="3" width="8.4" height="5.8" fill="#cfd6dc"/><rect x="7.2" y="6.4" width="5.6" height="6.4" fill="#fbfcfc" stroke="#3f4448" stroke-width="0.8"/><rect x="9" y="9.6" width="3" height="2.6" fill="#2179b8"/></svg>
<svg class="abs" style="left:506.8px;top:432.4px" width="14" height="14" viewBox="0 0 14 14"><path d="M1.6 3.2l3-1.6l3.2 1.2v6.4l-3 1.6l-3.2-1.2z" fill="#eef0f1" stroke="#3f4448" stroke-width="0.7"/><path d="M1.6 3.2l3.2 1.2v6.4M4.8 4.4l3-1.6" fill="none" stroke="#3f4448" stroke-width="0.6"/><circle cx="3.2" cy="8" r="1.6" fill="none" stroke="#3f4448" stroke-width="0.6"/><rect x="6.6" y="6.8" width="6.6" height="6.2" fill="#2179b8" stroke="#1b5f90" stroke-width="0.5"/><circle cx="9.9" cy="9.9" r="1.7" fill="#dbe9f3"/></svg>
<svg class="abs" style="left:522.8px;top:432.4px" width="14" height="14" viewBox="0 0 14 14"><path d="M7 1L12.6 4V10L7 13.2L1.4 10V4Z" fill="#3b9ad6" stroke="#1b5f90" stroke-width="0.8" stroke-linejoin="round"/><path d="M1.4 4L7 7V13.2M7 7L12.6 4" fill="none" stroke="#1b5f90" stroke-width="0.7"/><path d="M4.2 2.5L9.8 5.5M9.8 2.5L4.2 5.5M4.2 5.5V11.5M9.8 5.5V11.5M1.4 7L7 10L12.6 7" fill="none" stroke="#a9d6f1" stroke-width="0.45"/></svg>
<svg class="abs" style="left:540.4px;top:432.4px" width="14" height="14" viewBox="0 0 14 14"><rect x="2" y="1.2" width="3" height="3" fill="#f4f5f6" stroke="#3f4448" stroke-width="0.7"/><rect x="5.8" y="1.2" width="3" height="3" fill="#f4f5f6" stroke="#3f4448" stroke-width="0.7"/><rect x="2" y="5" width="3" height="2.8" fill="#f4f5f6" stroke="#3f4448" stroke-width="0.7"/><path d="M2 8.6h3l1.8 1.8v2.4h-4.8z" fill="#f4f5f6" stroke="#3f4448" stroke-width="0.7"/><rect x="8" y="8.4" width="2.2" height="4.4" fill="#f4f5f6" stroke="#3f4448" stroke-width="0.7"/><rect x="11" y="8.4" width="2.2" height="4.4" fill="#f4f5f6" stroke="#3f4448" stroke-width="0.7"/><path d="M7.2 5v2.8" stroke="#2179b8" stroke-width="0.9"/></svg>
</body>
</html>
